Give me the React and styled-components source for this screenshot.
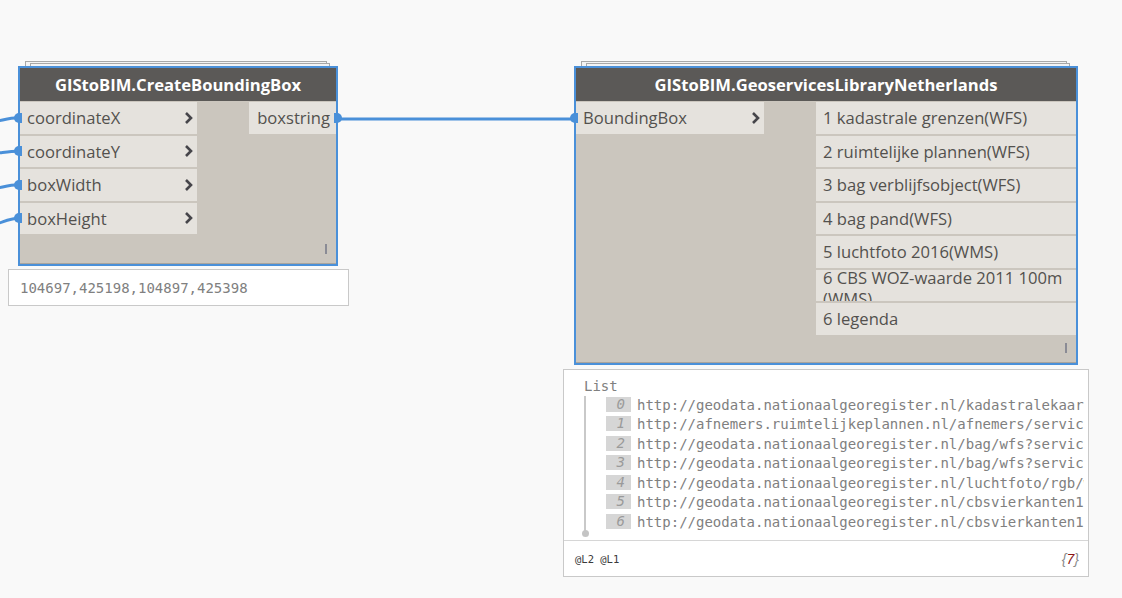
import React from 'react';
import styled, { createGlobalStyle } from 'styled-components';

const GlobalStyle = createGlobalStyle`
  html, body {
    margin: 0;
    padding: 0;
    background: #f9f9f9;
  }
`;

const BLUE = '#4a90d9';

const Canvas = styled.div`
  position: relative;
  width: 1122px;
  height: 598px;
  overflow: hidden;
  background: #f9f9f9;
  font-family: 'Open Sans', 'Noto Sans', sans-serif;
`;

const Wires = styled.svg`
  position: absolute;
  left: 0;
  top: 0;
  width: 1122px;
  height: 598px;
`;

const NodeGroup = styled.div`
  position: absolute;
  z-index: 1;
  left: ${p => p.$x}px;
  top: ${p => p.$y}px;
  width: ${p => p.$w}px;
  display: flex;
  flex-direction: column;
`;

const NodeFrame = styled.div`
  position: relative;
  border: 2px solid ${BLUE};
  background: #cbc6be;
  display: flex;
  flex-direction: column;

  &::before,
  &::after {
    content: '';
    position: absolute;
    height: 8px;
    border: 1px solid #a8a8a8;
    border-bottom: none;
    background: #f3f3f3;
    z-index: -1;
  }
  &::before {
    top: -7px;
    left: 5px;
    right: 9px;
  }
  &::after {
    top: -5px;
    left: 10px;
    right: 6px;
  }
`;

const Header = styled.div`
  height: 33px;
  background: #5b5957;
  color: #ffffff;
  font-weight: 700;
  font-size: 16.6px;
  display: flex;
  align-items: center;
  justify-content: center;
`;

const Body = styled.div`
  display: flex;
  justify-content: space-between;
  align-items: flex-start;
  padding-top: 1px;
`;

const PortColumn = styled.div`
  width: ${p => p.$w}px;
  display: flex;
  flex-direction: column;
  gap: 2px;
`;

const PortRow = styled.div`
  position: relative;
  height: 31.5px;
  background: #e5e2dd;
  color: #53514e;
  font-size: 16.6px;
  display: flex;
  align-items: ${p => (p.$wrap ? 'flex-start' : 'center')};
  justify-content: ${p => ({ right: 'flex-end', left: 'flex-start' }[p.$align] || 'space-between')};
  padding: ${p => (p.$align === 'right' ? '0 6px 0 8px' : '0 4px 0 7px')};
  box-sizing: border-box;
  white-space: ${p => (p.$wrap ? 'normal' : 'nowrap')};
  line-height: 21px;
  overflow: ${p => (p.$wrap ? 'hidden' : 'visible')};
`;

const PortLabel = styled.span`
  display: block;
  margin-top: ${p => (p.$wrap ? '-3px' : '0')};
`;

const PortDot = styled.span`
  position: absolute;
  top: 50%;
  width: 8px;
  height: 10px;
  margin-top: -5px;
  background: ${BLUE};
  ${p => (p.$side === 'left'
    ? 'left: -6px; border-radius: 5px 0 0 5px;'
    : 'right: -6px; border-radius: 0 5px 5px 0;')}
`;

const Footer = styled.div`
  height: ${p => p.$h}px;
  display: flex;
  align-items: center;
  justify-content: flex-end;
  padding-right: 9px;
  border-bottom: 1px solid #a9a49d;
`;

const LacingMark = styled.span`
  width: 2px;
  height: 10px;
  background: #8a8b95;
`;

const Bubble = styled.div`
  margin: ${p => p.$gap}px -11px 0 ${p => -p.$left}px;
  background: #ffffff;
  border: 1px solid #c9c9c9;
  font-family: 'DejaVu Sans Mono', 'Liberation Mono', monospace;
  color: #808080;
  font-size: 14px;
`;

const ValueLine = styled.div`
  height: 35px;
  display: flex;
  align-items: center;
  padding-left: 11px;
`;

const ListArea = styled.div`
  padding: 7px 4px 7px 20px;
`;

const ListLabel = styled.div`
  height: 18px;
  line-height: 18px;
`;

const ListTree = styled.div`
  position: relative;
  border-left: 2px solid #c9c9c9;
  margin-top: 1px;
  padding: 1px 0 0 20px;

  &::after {
    content: '';
    position: absolute;
    left: -4.5px;
    bottom: -4px;
    width: 7px;
    height: 7px;
    border-radius: 50%;
    background: #c4c4c4;
  }
`;

const ListItem = styled.div`
  height: 19.5px;
  display: flex;
  align-items: flex-start;
  gap: 6px;
  white-space: nowrap;
  overflow: hidden;
`;

const IndexBox = styled.span`
  flex: none;
  width: 25px;
  height: 15px;
  line-height: 15px;
  background: #d6d6d6;
  color: #9a9a9a;
  font-style: italic;
  text-align: right;
  padding-right: 6px;
  box-sizing: border-box;
`;

const Url = styled.span`
  line-height: 16px;
  max-width: 53ch;
  overflow: hidden;
`;

const BubbleFooter = styled.div`
  height: 35px;
  border-top: 1px solid #d6d6d6;
  display: flex;
  align-items: center;
  justify-content: space-between;
  padding: 0 9px 0 11px;
`;

const Levels = styled.span`
  font-size: 10.5px;
  color: #3a3a3a;
`;

const Count = styled.span`
  font-style: italic;
  font-size: 14px;
  color: #8a8a8a;
  font-family: 'Liberation Sans', 'DejaVu Sans', sans-serif;

  b {
    font-weight: 400;
    color: #8b1515;
  }
`;

const Chevron = () => (
  <svg width="9" height="14" viewBox="0 0 9 14">
    <path d="M2 2 L7 7 L2 12" fill="none" stroke="#46454a" strokeWidth="2.6" />
  </svg>
);

const InputPort = ({ label, connected }) => (
  <PortRow>
    {connected && <PortDot $side="left" />}
    <PortLabel>{label}</PortLabel>
    <Chevron />
  </PortRow>
);

const OutputPort = ({ label, connected, wrap, align }) => (
  <PortRow $align={align} $wrap={wrap}>
    <PortLabel $wrap={wrap}>{label}</PortLabel>
    {connected && <PortDot $side="right" />}
  </PortRow>
);

const urls = [
  'http://geodata.nationaalgeoregister.nl/kadastralekaart/wfs/v4_0?service=WFS',
  'http://afnemers.ruimtelijkeplannen.nl/afnemers/services?service=WFS',
  'http://geodata.nationaalgeoregister.nl/bag/wfs?service=WFS&request=GetFeature',
  'http://geodata.nationaalgeoregister.nl/bag/wfs?service=WFS&request=GetFeature',
  'http://geodata.nationaalgeoregister.nl/luchtfoto/rgb/wms?service=WMS',
  'http://geodata.nationaalgeoregister.nl/cbsvierkanten100m/wms?service=WMS',
  'http://geodata.nationaalgeoregister.nl/cbsvierkanten100m/ows?service=WMS'
];

const geoOutputs = [
  '1 kadastrale grenzen(WFS)',
  '2 ruimtelijke plannen(WFS)',
  '3 bag verblijfsobject(WFS)',
  '4 bag pand(WFS)',
  '5 luchtfoto 2016(WMS)',
  '6 CBS WOZ-waarde 2011 100m (WMS)',
  '6 legenda'
];

const incoming = [
  { y: 117.75, off: 6 },
  { y: 151.25, off: 3 },
  { y: 184.75, off: 6 },
  { y: 218.25, off: 9.5 }
];

export default function App() {
  return (
    <Canvas>
      <GlobalStyle />
      <Wires>
        {incoming.map(w => (
          <path
            key={w.y}
            d={`M -40 ${w.y + w.off * 1.15} C -4 ${w.y + w.off * 1.15}, 4 ${w.y}, 18 ${w.y}`}
            fill="none"
            stroke={BLUE}
            strokeWidth="3"
          />
        ))}
        <path d="M 338 119 L 576 119" fill="none" stroke={BLUE} strokeWidth="3" />
      </Wires>

      <NodeGroup $x={18} $y={66} $w={320}>
        <NodeFrame>
          <Header>GIStoBIM.CreateBoundingBox</Header>
          <Body>
            <PortColumn $w={177}>
              <InputPort label="coordinateX" connected />
              <InputPort label="coordinateY" connected />
              <InputPort label="boxWidth" connected />
              <InputPort label="boxHeight" connected />
            </PortColumn>
            <PortColumn $w={87}>
              <OutputPort label="boxstring" align="right" connected />
            </PortColumn>
          </Body>
          <Footer $h={29}>
            <LacingMark />
          </Footer>
        </NodeFrame>
        <Bubble $gap={3} $left={10}>
          <ValueLine>104697,425198,104897,425398</ValueLine>
        </Bubble>
      </NodeGroup>

      <NodeGroup $x={574} $y={66} $w={504}>
        <NodeFrame>
          <Header>GIStoBIM.GeoservicesLibraryNetherlands</Header>
          <Body>
            <PortColumn $w={188}>
              <InputPort label="BoundingBox" connected />
            </PortColumn>
            <PortColumn $w={260}>
              {geoOutputs.map(o => (
                <OutputPort key={o} label={o} align="left" wrap={o.length > 28} />
              ))}
            </PortColumn>
          </Body>
          <Footer $h={27}>
            <LacingMark />
          </Footer>
        </NodeFrame>
        <Bubble $gap={4} $left={11}>
          <ListArea>
            <ListLabel>List</ListLabel>
            <ListTree>
              {urls.map((u, i) => (
                <ListItem key={i}>
                  <IndexBox>{i}</IndexBox>
                  <Url>{u}</Url>
                </ListItem>
              ))}
            </ListTree>
          </ListArea>
          <BubbleFooter>
            <Levels>@L2 @L1</Levels>
            <Count>{'{'}<b>7</b>{'}'}</Count>
          </BubbleFooter>
        </Bubble>
      </NodeGroup>
    </Canvas>
  );
}
